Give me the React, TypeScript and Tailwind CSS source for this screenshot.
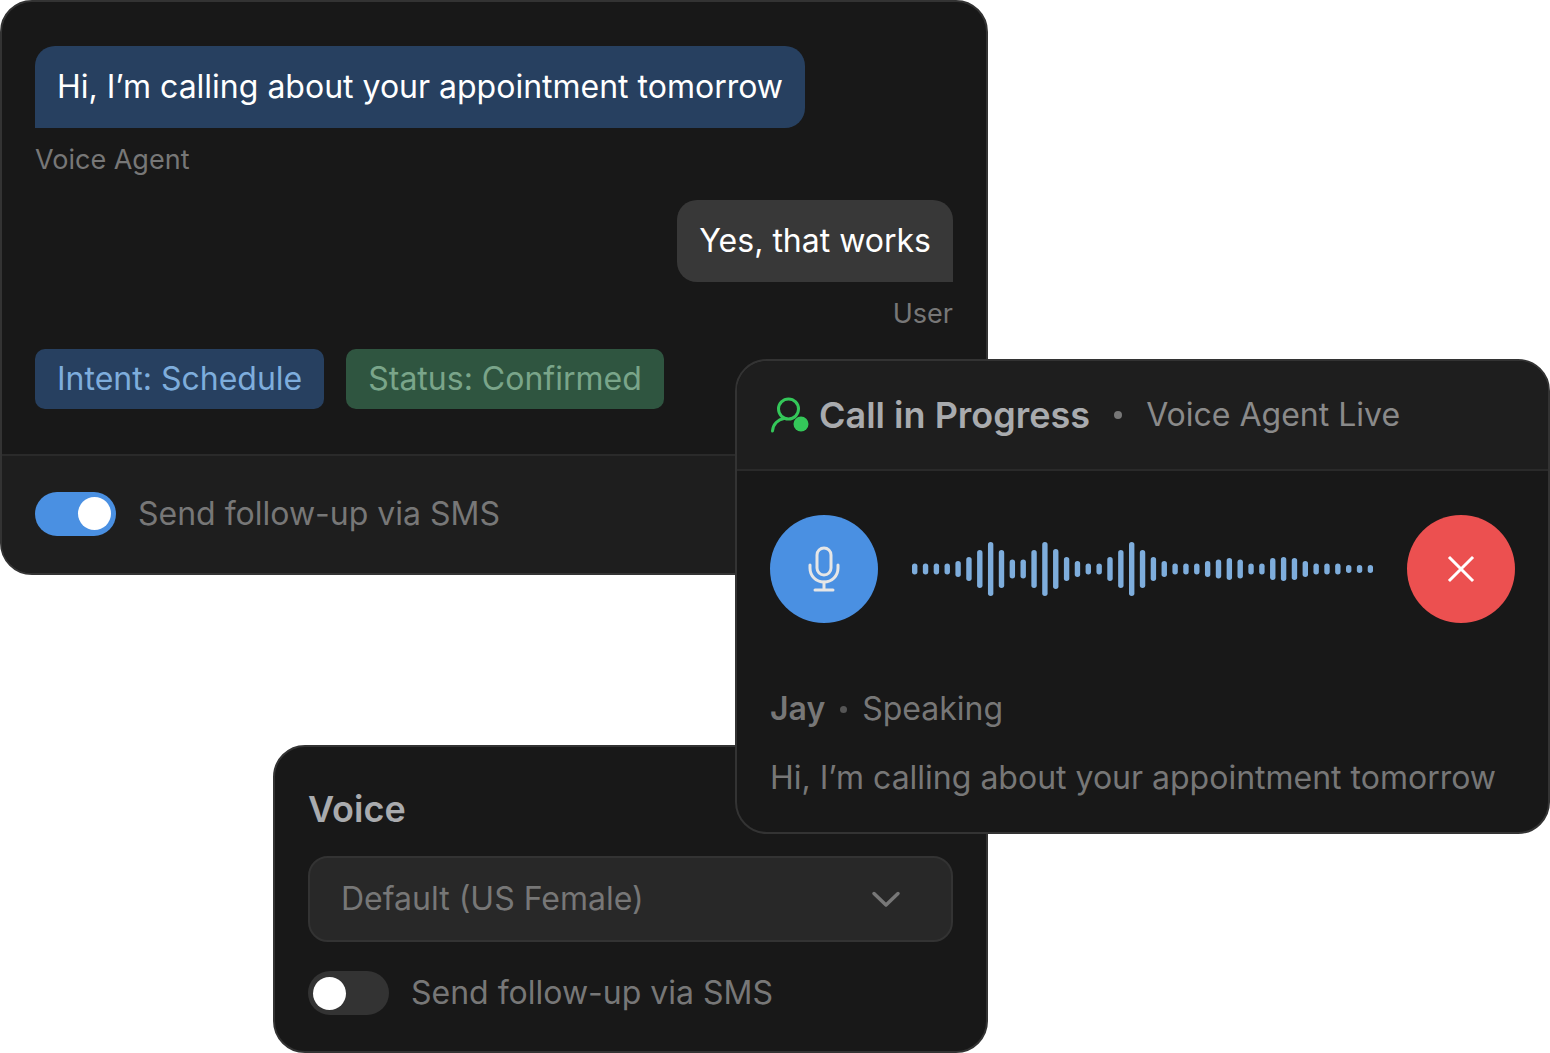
import React from 'react';

const bars = [11, 11, 11, 11, 16, 24, 38, 54, 38, 19, 19, 38, 54, 40, 24, 16, 11, 11, 24, 38, 54, 38, 24, 16, 11, 11, 11, 16, 19, 22, 19, 11, 11, 22, 24, 22, 16, 11, 11, 11, 8, 8, 8];

const Waveform: React.FC = () => (
  <svg width="461" height="56" viewBox="0 0 461 56" fill="#7eaddc">
    {bars.map((h, i) => (
      <rect key={i} x={i * 10.85} y={28 - h / 2} width="5.4" height={h} rx="2.7" />
    ))}
  </svg>
);

const Toggle: React.FC<{ on?: boolean }> = ({ on }) => (
  <div className={`w-[81px] h-[44px] rounded-full flex items-center px-[5px] ${on ? 'bg-[#4a90e2] justify-end' : 'bg-[#333333] justify-start'}`}>
    <div className="w-[33px] h-[33px] rounded-full bg-white"></div>
  </div>
);

const App: React.FC = () => {
  return (
    <div className="relative w-[1550px] h-[1053px] bg-white overflow-hidden font-['Inter',sans-serif]">
      {/* transcript card */}
      <div className="absolute left-0 top-0 w-[988px] h-[575px] rounded-[32px] border-2 border-[#333333] bg-[#181818] overflow-hidden flex flex-col">
        <div className="flex-1 px-[33px] pt-[44px]">
          <div className="w-fit h-[82px] px-[22px] flex items-center bg-[#274060] rounded-t-[20px] rounded-br-[20px] text-white text-[32px]">
            Hi, I’m calling about your appointment tomorrow
          </div>
          <div className="mt-[14px] text-[27px] leading-[36px] text-[#777777]">Voice Agent</div>
          <div className="mt-[22px] flex flex-col items-end">
            <div className="h-[82px] px-[22px] flex items-center bg-[#383838] rounded-t-[20px] rounded-bl-[20px] text-white text-[32px]">
              Yes, that works
            </div>
            <div className="mt-[14px] text-[27px] leading-[36px] text-[#777777]">User</div>
          </div>
          <div className="mt-[17px] flex gap-[22px]">
            <div className="h-[60px] px-[22px] flex items-center rounded-[10px] bg-[#274060] text-[#7eaddc] text-[32px]">Intent: Schedule</div>
            <div className="h-[60px] px-[22px] flex items-center rounded-[10px] bg-[#2f5540] text-[#7aa58a] text-[32px]">Status: Confirmed</div>
          </div>
        </div>
        <div className="h-[119px] border-t-2 border-[#2a2a2a] bg-[#1e1e1e] px-[33px] flex items-center gap-[22px] pb-[2px]">
          <Toggle on />
          <span className="text-[32px] text-[#777777]">Send follow-up via SMS</span>
        </div>
      </div>

      {/* voice settings card */}
      <div className="absolute left-[273px] top-[745px] w-[715px] h-[308px] rounded-[32px] border-2 border-[#333333] bg-[#181818] px-[33px] pt-[40px]">
        <div className="text-[36px] leading-[44px] font-semibold text-[#a9abae]">Voice</div>
        <div className="mt-[25px] h-[86px] rounded-[20px] border-2 border-[#333333] bg-[#282828] px-[31px] flex items-center justify-between">
          <span className="text-[32px] text-[#777777]">Default (US Female)</span>
          <svg width="36" height="36" viewBox="0 0 36 36" fill="none" stroke="#777777" strokeWidth="3.5" strokeLinecap="round" strokeLinejoin="round" className="mr-[16px]">
            <path d="M6 12.5 L18 24 L30 12.5" />
          </svg>
        </div>
        <div className="mt-[27px] flex items-center gap-[22px]">
          <Toggle />
          <span className="text-[32px] text-[#777777]">Send follow-up via SMS</span>
        </div>
      </div>

      {/* live call card */}
      <div className="absolute left-[735px] top-[359px] w-[815px] h-[475px] rounded-[32px] border-2 border-[#333333] bg-[#181818] overflow-hidden flex flex-col">
        <div className="h-[110px] shrink-0 border-b-2 border-[#2a2a2a] bg-[#1e1e1e] px-[33px] flex items-center">
          <svg width="40" height="40" viewBox="0 0 40 40" fill="none" className="shrink-0 mr-[9px]">
            <circle cx="18.5" cy="14" r="10" stroke="#34c759" strokeWidth="3" />
            <path d="M2.5 36 C3 29 8 24.5 14 23.5" stroke="#34c759" strokeWidth="3" strokeLinecap="round" />
            <circle cx="31" cy="29" r="7.5" fill="#34c759" />
          </svg>
          <span className="text-[36px] font-semibold text-[#a9abae]">Call in Progress</span>
          <span className="w-[8px] h-[8px] rounded-full bg-[#777777] ml-[24px] mr-[24px]"></span>
          <span className="text-[32px] text-[#8a8a8a]">Voice Agent Live</span>
        </div>
        <div className="px-[33px] pt-[44px] flex-1">
          <div className="flex items-center justify-between">
            <div className="w-[108px] h-[108px] rounded-full bg-[#4a90e2] flex items-center justify-center">
              <svg width="36" height="48" viewBox="0 0 36 48" fill="none" stroke="#e6e6e6" strokeWidth="3" strokeLinecap="round">
                <rect x="11" y="3" width="14" height="27" rx="7" />
                <path d="M4 20 V23 C4 31 10 37 18 37 C26 37 32 31 32 23 V20" />
                <path d="M18 37 V44" />
                <path d="M9 45 H27" />
              </svg>
            </div>
            <Waveform />
            <div className="w-[108px] h-[108px] rounded-full bg-[#ec5050] flex items-center justify-center">
              <svg width="28" height="28" viewBox="0 0 28 28" fill="none" stroke="#ffffff" strokeWidth="3" strokeLinecap="square">
                <path d="M3 3 L25 25 M25 3 L3 25" />
              </svg>
            </div>
          </div>
          <div className="mt-[62px] flex items-center">
            <span className="text-[32px] font-semibold text-[#777777]">Jay</span>
            <span className="w-[7px] h-[7px] rounded-full bg-[#555555] mx-[15px]"></span>
            <span className="text-[32px] text-[#777777]">Speaking</span>
          </div>
          <div className="mt-[21px] text-[32px] text-[#777777] whitespace-nowrap">Hi, I’m calling about your appointment tomorrow</div>
        </div>
      </div>
    </div>
  );
};

export default App;
